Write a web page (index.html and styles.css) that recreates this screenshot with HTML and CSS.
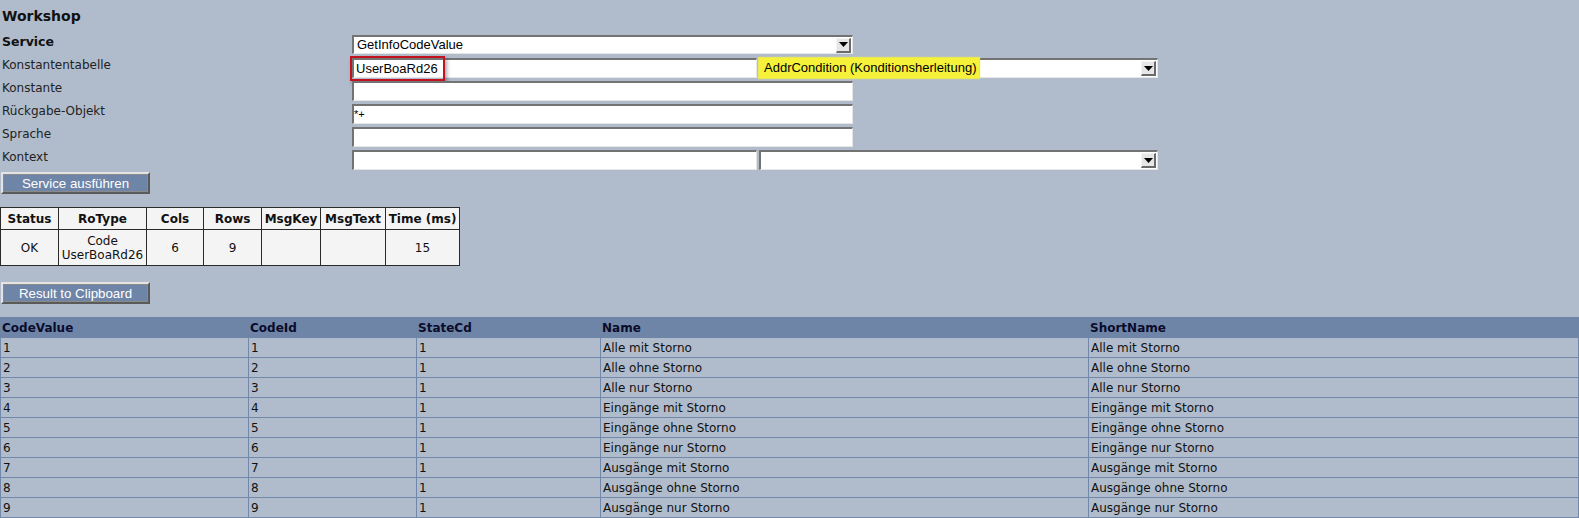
FILE: index.html
```html
<!DOCTYPE html>
<html lang="de">
<head>
<meta charset="utf-8">
<title>Workshop</title>
<link rel="stylesheet" href="styles.css">
</head>
<body>
<div class="page">
  <h1 class="title">Workshop</h1>
  <div class="form">
    <div class="label bold">Service</div>
    <div class="field">
      <div class="select wide">
        <span class="sel-text">GetInfoCodeValue</span>
        <span class="arrow"><svg width="9" height="5" viewBox="0 0 9 5"><path d="M0 0h9L4.5 5z" fill="#000"/></svg></span>
      </div>
    </div>

    <div class="label">Konstantentabelle</div>
    <div class="field pair">
      <div class="input half marked">
        <span class="in-text">UserBoaRd26</span>
        <span class="redbox"></span>
      </div>
      <div class="select half2">
        <span class="sel-text hl">AddrCondition (Konditionsherleitung)</span>
        <span class="arrow"><svg width="9" height="5" viewBox="0 0 9 5"><path d="M0 0h9L4.5 5z" fill="#000"/></svg></span>
      </div>
    </div>

    <div class="label">Konstante</div>
    <div class="field"><div class="input wide"></div></div>

    <div class="label">Rückgabe-Objekt</div>
    <div class="field"><div class="input wide"><span class="in-text small">*+</span></div></div>

    <div class="label">Sprache</div>
    <div class="field"><div class="input wide"></div></div>

    <div class="label">Kontext</div>
    <div class="field pair">
      <div class="input half"></div>
      <div class="select half2">
        <span class="sel-text"></span>
        <span class="arrow"><svg width="9" height="5" viewBox="0 0 9 5"><path d="M0 0h9L4.5 5z" fill="#000"/></svg></span>
      </div>
    </div>
  </div>

  <button class="btn btn-run">Service ausführen</button>

  <table class="status">
    <colgroup>
      <col class="c1"><col class="c2"><col class="c3"><col class="c4"><col class="c5"><col class="c6"><col class="c7">
    </colgroup>
    <thead>
      <tr class="sh"><th>Status</th><th>RoType</th><th>Cols</th><th>Rows</th><th>MsgKey</th><th>MsgText</th><th>Time (ms)</th></tr>
    </thead>
    <tbody>
      <tr class="sd"><td>OK</td><td>Code<br>UserBoaRd26</td><td>6</td><td>9</td><td></td><td></td><td>15</td></tr>
    </tbody>
  </table>

  <button class="btn btn-clip">Result to Clipboard</button>

  <table class="result">
    <colgroup>
      <col class="r1"><col class="r2"><col class="r3"><col class="r4"><col class="r5">
    </colgroup>
    <thead>
      <tr><th>CodeValue</th><th>CodeId</th><th>StateCd</th><th>Name</th><th>ShortName</th></tr>
    </thead>
    <tbody>
      <tr><td>1</td><td>1</td><td>1</td><td>Alle mit Storno</td><td>Alle mit Storno</td></tr>
      <tr><td>2</td><td>2</td><td>1</td><td>Alle ohne Storno</td><td>Alle ohne Storno</td></tr>
      <tr><td>3</td><td>3</td><td>1</td><td>Alle nur Storno</td><td>Alle nur Storno</td></tr>
      <tr><td>4</td><td>4</td><td>1</td><td>Eingänge mit Storno</td><td>Eingänge mit Storno</td></tr>
      <tr><td>5</td><td>5</td><td>1</td><td>Eingänge ohne Storno</td><td>Eingänge ohne Storno</td></tr>
      <tr><td>6</td><td>6</td><td>1</td><td>Eingänge nur Storno</td><td>Eingänge nur Storno</td></tr>
      <tr><td>7</td><td>7</td><td>1</td><td>Ausgänge mit Storno</td><td>Ausgänge mit Storno</td></tr>
      <tr><td>8</td><td>8</td><td>1</td><td>Ausgänge ohne Storno</td><td>Ausgänge ohne Storno</td></tr>
      <tr><td>9</td><td>9</td><td>1</td><td>Ausgänge nur Storno</td><td>Ausgänge nur Storno</td></tr>
    </tbody>
  </table>
</div>
</body>
</html>
```

FILE: styles.css
```css
html, body {
  margin: 0;
  padding: 0;
  background: #b0bccb;
  overflow: hidden;
}
body {
  font-family: "DejaVu Sans", Verdana, sans-serif;
  font-size: 12px;
  color: #1a1a1a;
}
.page {
  width: 1579px;
  height: 518px;
  overflow: hidden;
}
.title {
  margin: 0;
  padding: 7px 0 0 2px;
  height: 28px;
  box-sizing: border-box;
  font-size: 14px;
  font-weight: bold;
  color: #111;
  line-height: 18px;
}
.form {
  display: grid;
  grid-template-columns: 352px 1fr;
  grid-auto-rows: 20px;
  row-gap: 3px;
  margin-top: 7px;
}
.label {
  padding-left: 2px;
  line-height: 14px;
  color: #222;
}
.label.bold {
  font-weight: bold;
  font-size: 12.5px;
  color: #111;
}
.field {
  display: flex;
  align-items: flex-start;
}
.pair {
  gap: 2px;
}
.input, .select {
  box-sizing: border-box;
  height: 20px;
  background: #fff;
  border-style: solid;
  border-width: 2px 1px 1px 2px;
  border-color: #737373 #e6e6e6 #e6e6e6 #737373;
  font-family: "Liberation Sans", Arial, sans-serif;
  font-size: 13px;
  color: #000;
  position: relative;
  display: flex;
  align-items: center;
}
.wide { width: 501px; }
.half { width: 405px; }
.half2 { width: 399px; }
.select.wide { height: 19px; }
.sel-text {
  flex: 1;
  padding-left: 3px;
  line-height: 16px;
  white-space: nowrap;
}
.sel-text.hl {
  flex: 0 0 auto;
  align-self: stretch;
  margin: -2px 0 -1px -2px;
  padding: 0 3px 0 5px;
  background: #f6f23a;
  display: flex;
  align-items: center;
  box-shadow: 0 0 1px 1px #e8e65a;
}
.sel-text.hl + .arrow { margin-left: auto; }
.arrow {
  width: 15px;
  height: 15px;
  box-sizing: border-box;
  margin-right: 1px;
  background: #e6e6e6;
  border-style: solid;
  border-width: 1px 2px 2px 1px;
  border-color: #f4f4f4 #6a6a6a #6a6a6a #f4f4f4;
  display: flex;
  align-items: center;
  justify-content: center;
}
.in-text {
  padding-left: 2px;
  line-height: 16px;
}
.in-text.small {
  font-size: 11px;
  padding-left: 0;
  margin-top: -2px;
}
.marked .redbox {
  position: absolute;
  left: -4px;
  top: -4px;
  width: 95px;
  height: 25px;
  box-sizing: border-box;
  border: 2px solid #c4121f;
  box-shadow: 2px 3px 4px rgba(0, 0, 0, 0.35);
}
.btn {
  display: block;
  box-sizing: border-box;
  width: 149px;
  height: 22px;
  margin-left: 1px;
  padding: 0;
  background: #6e85a8;
  color: #fff;
  font-family: "Liberation Sans", Arial, sans-serif;
  font-size: 13.3px;
  border-style: solid;
  border-width: 2px;
  border-color: #e4e4e4 #5a5a5a #5a5a5a #e4e4e4;
  outline: 1px solid #8a8a8a;
  outline-offset: -3px;
  cursor: pointer;
}
.btn-run { margin-top: 2px; }
.status {
  margin-top: 13px;
  border-collapse: collapse;
  background: #f4f4f4;
  width: 459px;
  table-layout: fixed;
}
.status col.c1 { width: 58px; }
.status col.c2 { width: 88px; }
.status col.c3 { width: 57px; }
.status col.c4 { width: 58px; }
.status col.c5 { width: 59px; }
.status col.c6 { width: 65px; }
.status col.c7 { width: 74px; }
.status th, .status td {
  border: 1px solid #2a2a2a;
  text-align: center;
  padding: 0;
  color: #111;
}
.status tr.sh { height: 22px; }
.status tr.sd { height: 36px; }
.status th {
  font-weight: bold;
  font-size: 12px;
}
.status td {
  font-size: 12px;
  line-height: 14px;
}
.btn-clip { margin-top: 16px; }
.result {
  margin-top: 13px;
  border-collapse: collapse;
  width: 1578px;
  table-layout: fixed;
}
.result col.r1 { width: 248px; }
.result col.r2 { width: 168px; }
.result col.r3 { width: 184px; }
.result col.r4 { width: 488px; }
.result col.r5 { width: 490px; }
.result tr { height: 20px; }
.result th {
  background: #6e85a8;
  text-align: left;
  font-weight: bold;
  font-size: 12px;
  color: #0b0b2a;
  padding: 0 0 0 1px;
  border: 1px solid #6e85a8;
}
.result td {
  padding: 0 0 0 2px;
  font-size: 12px;
  color: #111;
  border: 1px solid #7288ab;
  white-space: nowrap;
}
```
